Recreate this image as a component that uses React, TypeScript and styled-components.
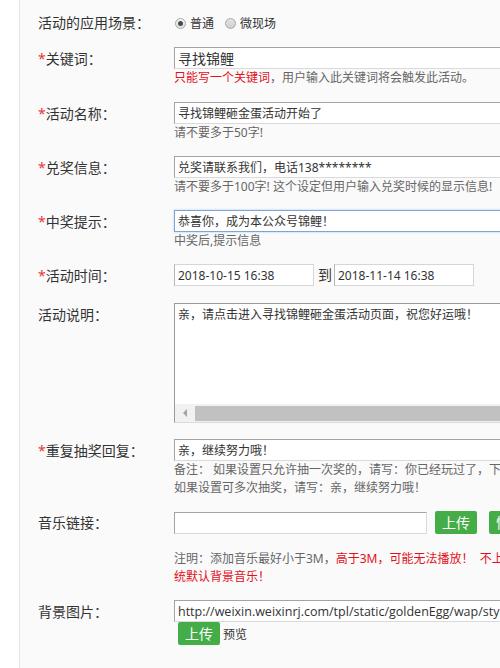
import React from "react";
import styled, { createGlobalStyle } from "styled-components";

const Global = createGlobalStyle`
  html, body { margin: 0; padding: 0; background: #fff; overflow: hidden; }
  body { font-family: "Noto Sans", "Noto Sans CJK SC", sans-serif; color: #333; }
  #root { min-height: 668px; }
`;

const Page = styled.div`
  display: flex;
  min-height: 668px;
  width: 700px;
`;

const Side = styled.div`
  width: 19px;
  flex: none;
  background: #fff;
  border-right: 1px solid #e6e6e6;
`;

const Main = styled.div`
  flex: 1;
  background: #fafafa;
  padding: 11px 0 0 18px;
`;

const Row = styled.div<{ $gap?: number }>`
  display: grid;
  grid-template-columns: 136px 395px;
  margin-bottom: ${(p) => (p.$gap ?? 14)}px;
`;

const Label = styled.div`
  font-size: 14px;
  line-height: 24px;
  color: #333;
  white-space: nowrap;
`;

const Star = styled.span`
  color: #e4393c;
`;

const Field = styled.div`
  display: flex;
  flex-direction: column;
  align-items: flex-start;
`;

const Radios = styled.div`
  display: flex;
  align-items: center;
  height: 24px;
  font-size: 12px;
  color: #333;
`;

const RadioItem = styled.label`
  display: flex;
  align-items: center;
  gap: 4px;
  margin-right: 10px;
`;

const RadioDot = styled.span<{ $on?: boolean }>`
  position: relative;
  width: 11px;
  height: 11px;
  margin-left: 1px;
  border-radius: 50%;
  box-sizing: border-box;
  border: 1px solid #a9a9a9;
  background: ${(p) => (p.$on ? "linear-gradient(#f3f3f3, #e2e2e2)" : "linear-gradient(#e4e4e4, #cfcfcf)")};
  &::after {
    content: "";
    display: ${(p) => (p.$on ? "block" : "none")};
    position: absolute;
    left: 2px;
    top: 2px;
    width: 5px;
    height: 5px;
    border-radius: 50%;
    background: #4a4a4a;
  }
`;

const Input = styled.input<{ $w?: number; $fs?: number; $focus?: boolean }>`
  display: block;
  box-sizing: border-box;
  width: ${(p) => p.$w ?? 395}px;
  height: 22px;
  margin: 0;
  padding: 0 3px;
  border: 1px solid;
  border-color: ${(p) => (p.$focus ? "#7aa6de" : "#a3a3a3 #dadada #dadada #a3a3a3")};
  box-shadow: ${(p) => (p.$focus ? "0 0 2px rgba(100,150,220,0.5)" : "none")};
  background: #fff;
  font-family: "Noto Sans", "Noto Sans CJK SC", sans-serif;
  font-size: ${(p) => p.$fs ?? 12}px;
  color: #333;
  outline: none;
`;

const DateInput = styled(Input)`
  border-color: #d6d6d6 #d6d6d6 #d6d6d6 #b5b5b5;
`;

const UrlInput = styled(Input)`
  font-family: "Open Sans", "Noto Sans CJK SC", sans-serif;
  font-size: 12.5px;
`;

const Hint = styled.div<{ $mt?: number }>`
  font-size: 12px;
  line-height: 18px;
  color: #666;
  margin-top: ${(p) => p.$mt ?? 0}px;
  white-space: normal;
`;

const Red = styled.span`
  color: #e3101a;
`;

const DateLine = styled.div`
  display: flex;
  align-items: center;
`;

const To = styled.span`
  font-size: 14px;
  line-height: 22px;
  color: #333;
  margin: 0 2px 0 4px;
`;

const TextBox = styled.div`
  box-sizing: border-box;
  width: 395px;
  height: 120px;
  display: flex;
  flex-direction: column;
  border: 1px solid;
  border-color: #9a9a9a #dadada #dadada #9a9a9a;
  background: #fff;
`;

const TextArea = styled.textarea`
  flex: 1;
  display: block;
  border: none;
  resize: none;
  outline: none;
  margin: 0;
  padding: 2px 3px;
  font-family: "Noto Sans", "Noto Sans CJK SC", sans-serif;
  font-size: 12px;
  line-height: 18px;
  color: #333;
  background: #fff;
  white-space: pre;
  overflow: hidden;
`;

const HScroll = styled.div`
  height: 18px;
  flex: none;
  display: flex;
  align-items: stretch;
  background: #f1f1f1;
`;

const ScrollArrow = styled.div`
  width: 20px;
  flex: none;
  display: flex;
  align-items: center;
  justify-content: center;
  &::before {
    content: "";
    width: 0;
    height: 0;
    border-top: 4px solid transparent;
    border-bottom: 4px solid transparent;
    border-right: 4px solid #a3a3a3;
  }
`;

const ScrollThumb = styled.div`
  flex: 1;
  margin: 2px 0 1px 0;
  background: #c1c1c1;
`;

const Inline = styled.div`
  display: flex;
  align-items: center;
`;

const Btn = styled.button<{ $ml?: number }>`
  height: 23px;
  margin: 0 0 0 ${(p) => p.$ml ?? 0}px;
  padding: 0 7px;
  border: none;
  border-radius: 2px;
  background: #44ad48;
  color: #fff;
  font-family: "Noto Sans", "Noto Sans CJK SC", sans-serif;
  font-size: 14px;
  line-height: 23px;
  white-space: nowrap;
  cursor: pointer;
`;

const Preview = styled.span`
  font-size: 12px;
  color: #333;
  margin-left: 3px;
`;

export default function App() {
  return (
    <>
      <Global />
      <Page>
        <Side />
        <Main>
          <Row $gap={12}>
            <Label>活动的应用场景：</Label>
            <Field>
              <Radios>
                <RadioItem>
                  <RadioDot $on />
                  普通
                </RadioItem>
                <RadioItem>
                  <RadioDot />
                  微现场
                </RadioItem>
              </Radios>
            </Field>
          </Row>

          <Row $gap={15}>
            <Label>
              <Star>*</Star>关键词：
            </Label>
            <Field>
              <Input $fs={14} defaultValue="寻找锦鲤" />
              <Hint>
                <Red>只能写一个关键词</Red>，用户输入此关键词将会触发此活动。
              </Hint>
            </Field>
          </Row>

          <Row>
            <Label>
              <Star>*</Star>活动名称：
            </Label>
            <Field>
              <Input defaultValue="寻找锦鲤砸金蛋活动开始了" />
              <Hint>请不要多于50字!</Hint>
            </Field>
          </Row>

          <Row>
            <Label>
              <Star>*</Star>兑奖信息：
            </Label>
            <Field>
              <Input defaultValue="兑奖请联系我们，电话138********" />
              <Hint>请不要多于100字! 这个设定但用户输入兑奖时候的显示信息!</Hint>
            </Field>
          </Row>

          <Row>
            <Label>
              <Star>*</Star>中奖提示：
            </Label>
            <Field>
              <Input $focus defaultValue="恭喜你，成为本公众号锦鲤！" />
              <Hint>中奖后,提示信息</Hint>
            </Field>
          </Row>

          <Row $gap={15}>
            <Label>
              <Star>*</Star>活动时间：
            </Label>
            <Field>
              <DateLine>
                <DateInput $w={140} defaultValue="2018-10-15 16:38" />
                <To>到</To>
                <DateInput $w={140} defaultValue="2018-11-14 16:38" />
              </DateLine>
            </Field>
          </Row>

          <Row $gap={16}>
            <Label>活动说明：</Label>
            <Field>
              <TextBox>
                <TextArea defaultValue="亲，请点击进入寻找锦鲤砸金蛋活动页面，祝您好运哦！" />
                <HScroll>
                  <ScrollArrow />
                  <ScrollThumb />
                </HScroll>
              </TextBox>
            </Field>
          </Row>

          <Row>
            <Label>
              <Star>*</Star>重复抽奖回复：
            </Label>
            <Field>
              <Input defaultValue="亲，继续努力哦！" />
              <Hint>
                备注： 如果设置只允许抽一次奖的，请写：你已经玩过了，下次再来吧！
                <br />
                如果设置可多次抽奖，请写：亲，继续努力哦！
              </Hint>
            </Field>
          </Row>

          <Row>
            <Label>音乐链接：</Label>
            <Field>
              <Inline>
                <Input $w={253} defaultValue="" />
                <Btn $ml={8}>上传</Btn>
                <Btn $ml={12}>恢复默认</Btn>
              </Inline>
              <Hint $mt={16}>
                注明：添加音乐最好小于3M，
                <Red>高于3M，可能无法播放！&nbsp; 不上传则使用系统默认背景音乐！</Red>
              </Hint>
            </Field>
          </Row>

          <Row>
            <Label>背景图片：</Label>
            <Field>
              <UrlInput defaultValue="http://weixin.weixinrj.com/tpl/static/goldenEgg/wap/style/images/bg.jpg" />
              <Inline>
                <Btn $ml={4}>上传</Btn>
                <Preview>预览</Preview>
              </Inline>
            </Field>
          </Row>
        </Main>
      </Page>
    </>
  );
}
